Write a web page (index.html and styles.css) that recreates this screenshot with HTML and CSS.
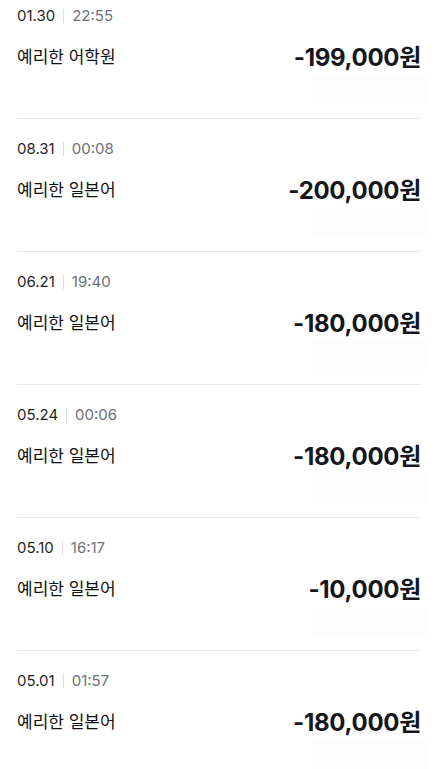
FILE: index.html
```html
<!DOCTYPE html>
<html lang="ko">
  <head>
    <meta charset="UTF-8" />
    <meta name="viewport" content="width=device-width, initial-scale=1.0" />
    <title>결제 내역</title>
    <link rel="stylesheet" href="styles.css">
  </head>
  <body>
    <ul class="history">
      <li class="item">
        <div class="meta"><span class="date">01.30</span><span class="time">22:55</span></div>
        <div class="main">
          <span class="title">예리한 어학원</span>
          <span class="amount">-199,000원</span>
        </div>
        <div class="slot"></div>
      </li>
      <li class="item">
        <div class="meta"><span class="date">08.31</span><span class="time">00:08</span></div>
        <div class="main">
          <span class="title">예리한 일본어</span>
          <span class="amount">-200,000원</span>
        </div>
        <div class="slot"></div>
      </li>
      <li class="item">
        <div class="meta"><span class="date">06.21</span><span class="time">19:40</span></div>
        <div class="main">
          <span class="title">예리한 일본어</span>
          <span class="amount">-180,000원</span>
        </div>
        <div class="slot"></div>
      </li>
      <li class="item">
        <div class="meta"><span class="date">05.24</span><span class="time">00:06</span></div>
        <div class="main">
          <span class="title">예리한 일본어</span>
          <span class="amount">-180,000원</span>
        </div>
        <div class="slot"></div>
      </li>
      <li class="item">
        <div class="meta"><span class="date">05.10</span><span class="time">16:17</span></div>
        <div class="main">
          <span class="title">예리한 일본어</span>
          <span class="amount">-10,000원</span>
        </div>
        <div class="slot"></div>
      </li>
      <li class="item">
        <div class="meta"><span class="date">05.01</span><span class="time">01:57</span></div>
        <div class="main">
          <span class="title">예리한 일본어</span>
          <span class="amount">-180,000원</span>
        </div>
        <div class="slot"></div>
      </li>
    </ul>
  </body>
</html>
```

FILE: styles.css
```css
body {
  margin: 0;
  background: #fff;
  font-family: "Inter", "Noto Sans CJK KR", sans-serif;
  color: #191f28;
  overflow: hidden;
}

.history {
  list-style: none;
  margin: -14px 0 0;
  padding: 0;
}

.item {
  margin: 0 16px 0 17px;
  padding: 20px 0 14px;
  border-bottom: 1px solid #e6e7ea;
  display: flex;
  flex-direction: column;
}

.meta {
  display: flex;
  align-items: center;
  height: 20px;
  font-size: 15px;
  line-height: 20px;
  font-weight: 400;
}

.date {
  color: #1f1f1f;
  padding-right: 8px;
  border-right: 1px solid #dcdde1;
  line-height: 14px;
}

.time {
  color: #6e7079;
  padding-left: 8px;
}

.main {
  display: flex;
  justify-content: space-between;
  align-items: center;
  margin-top: 13px;
  height: 32px;
}

.title {
  font-family: "Noto Sans CJK KR", sans-serif;
  font-size: 17px;
  color: #111;
}

.amount {
  font-size: 24px;
  font-weight: 700;
  letter-spacing: -0.3px;
  color: #14161c;
}

.slot {
  align-self: flex-end;
  width: 115px;
  height: 29px;
  margin: 4px -7px 0 0;
  background: #fdfdfe;
}
```
